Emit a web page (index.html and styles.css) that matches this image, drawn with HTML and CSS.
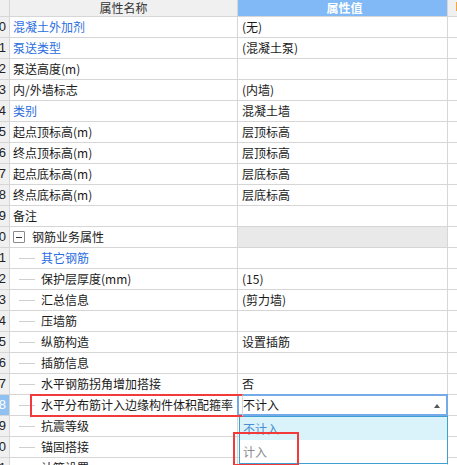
FILE: index.html
```
<!DOCTYPE html>
<html>
<head>
<meta charset="utf-8">
<link rel="stylesheet" href="styles.css">
</head>
<body>
<div class="grid">
  <div class="row head">
    <div class="gut"></div>
    <div class="name hname">属性名称</div>
    <div class="val hval">属性值</div>
    <div class="extra hextra"><span class="mark"></span></div>
  </div>
  <div class="row"><div class="gut"><span>20</span></div><div class="name link">混凝土外加剂</div><div class="val">(无)</div><div class="extra"></div></div>
  <div class="row"><div class="gut"><span>21</span></div><div class="name link">泵送类型</div><div class="val">(混凝土泵)</div><div class="extra"></div></div>
  <div class="row"><div class="gut"><span>22</span></div><div class="name">泵送高度(m)</div><div class="val"></div><div class="extra"></div></div>
  <div class="row"><div class="gut"><span>23</span></div><div class="name">内/外墙标志</div><div class="val">(内墙)</div><div class="extra"></div></div>
  <div class="row"><div class="gut"><span>24</span></div><div class="name link">类别</div><div class="val">混凝土墙</div><div class="extra"></div></div>
  <div class="row"><div class="gut"><span>25</span></div><div class="name">起点顶标高(m)</div><div class="val">层顶标高</div><div class="extra"></div></div>
  <div class="row"><div class="gut"><span>26</span></div><div class="name">终点顶标高(m)</div><div class="val">层顶标高</div><div class="extra"></div></div>
  <div class="row"><div class="gut"><span>27</span></div><div class="name">起点底标高(m)</div><div class="val">层底标高</div><div class="extra"></div></div>
  <div class="row"><div class="gut"><span>28</span></div><div class="name">终点底标高(m)</div><div class="val">层底标高</div><div class="extra"></div></div>
  <div class="row"><div class="gut"><span>29</span></div><div class="name">备注</div><div class="val"></div><div class="extra"></div></div>
  <div class="row"><div class="gut"><span>30</span></div><div class="name group"><span class="toggle"><span class="minus"></span></span>钢筋业务属性</div><div class="val grey"></div><div class="extra"></div></div>
  <div class="row"><div class="gut"><span>31</span></div><div class="name child link"><span class="branch"></span>其它钢筋</div><div class="val"></div><div class="extra"></div></div>
  <div class="row"><div class="gut"><span>32</span></div><div class="name child"><span class="branch"></span>保护层厚度(mm)</div><div class="val">(15)</div><div class="extra"></div></div>
  <div class="row"><div class="gut"><span>33</span></div><div class="name child"><span class="branch"></span>汇总信息</div><div class="val">(剪力墙)</div><div class="extra"></div></div>
  <div class="row"><div class="gut"><span>34</span></div><div class="name child"><span class="branch"></span>压墙筋</div><div class="val"></div><div class="extra"></div></div>
  <div class="row"><div class="gut"><span>35</span></div><div class="name child"><span class="branch"></span>纵筋构造</div><div class="val">设置插筋</div><div class="extra"></div></div>
  <div class="row"><div class="gut"><span>36</span></div><div class="name child"><span class="branch"></span>插筋信息</div><div class="val"></div><div class="extra"></div></div>
  <div class="row"><div class="gut"><span>37</span></div><div class="name child"><span class="branch"></span>水平钢筋拐角增加搭接</div><div class="val">否</div><div class="extra"></div></div>
  <div class="row sel"><div class="gut"><span>38</span></div><div class="name child"><span class="branch"></span>水平分布筋计入边缘构件体积配箍率</div>
    <div class="val combo-cell">
      <div class="combo">不计入<span class="arrow"></span></div>
      <div class="list">
        <div class="opt hi">不计入</div>
        <div class="opt dim">计入</div>
      </div>
      <div class="redbox red2"></div>
    </div>
    <div class="extra"></div>
    <div class="redbox red1"></div>
  </div>
  <div class="row"><div class="gut"><span>39</span></div><div class="name child"><span class="branch"></span>抗震等级</div><div class="val"></div><div class="extra"></div></div>
  <div class="row"><div class="gut"><span>40</span></div><div class="name child"><span class="branch"></span>锚固搭接</div><div class="val"></div><div class="extra"></div></div>
  <div class="row"><div class="gut"><span>41</span></div><div class="name child"><span class="branch"></span>计算设置</div><div class="val"></div><div class="extra"></div></div>
</div>
</body>
</html>
```
FILE: styles.css
```
* { box-sizing: border-box; }
html, body { margin: 0; padding: 0; background: #fff; overflow: hidden; }
body {
  font-family: "Noto Sans CJK SC", "Microsoft YaHei", sans-serif;
  font-size: 12px;
  color: #1a1a1a;
  width: 457px;
  height: 465px;
}
.grid { display: flex; flex-direction: column; }
.row {
  display: grid;
  grid-template-columns: 10px 228px 210px 1fr;
  height: 21px;
  border-bottom: 1px solid #d6d6d6;
  position: relative;
  line-height: 20px;
  flex: none;
}
.row > div { border-right: 1px solid #d6d6d6; white-space: nowrap; overflow: hidden; }
.row > .extra { border-right: none; }
.head { height: 17px; line-height: 16px; background: #f0f0f0; }
.gut {
  background: #f0f0f0;
  display: flex;
  justify-content: flex-end;
  padding-right: 3px;
  color: #222;
  font-family: "Liberation Sans", sans-serif;
  font-size: 13px;
}
.gut span { flex: none; }
.name { padding-left: 3px; }
.hname { text-align: center; color: #333; padding-left: 0; }
.hval { background: #80b9f5; color: #fff; text-align: center; font-weight: bold; }
.hextra { background: #f0f0f0; position: relative; }
.mark { position: absolute; left: 8px; top: 2px; width: 2px; height: 9px; background: #f5a53c; }
.val { padding-left: 4px; }
.val.grey { background: #e9e9e9; }
.link { color: #2a6de0; }
.group { display: flex; align-items: center; padding-left: 3px; }
.toggle {
  width: 12px; height: 12px; border: 1px solid #8a8a8a; border-radius: 1px;
  margin-right: 7px; display: flex; align-items: center; justify-content: center; flex: none;
}
.minus { width: 6px; height: 1px; background: #333; }
.child { display: flex; align-items: center; padding-left: 9px; }
.branch { width: 16px; height: 1px; background: #d0d0d0; margin-right: 6px; flex: none; }
.sel .gut { background: #8fc2f2; color: #fff; }
.row.sel > .combo-cell { overflow: visible; position: relative; padding-left: 0; }
.combo {
  position: absolute; left: -1px; top: -1px; width: 211px; height: 22px;
  border: 2px solid #74aae8; background: #fff; padding-left: 4px; line-height: 18px;
  z-index: 2;
}
.arrow {
  position: absolute; right: 6px; top: 8px; width: 0; height: 0;
  border-left: 3px solid transparent; border-right: 3px solid transparent;
  border-bottom: 4px solid #555;
}
.list {
  position: absolute; left: 1px; top: 21px; width: 209px; height: 48px;
  border: 1px solid #3d9fd2; background: #fff; z-index: 3;
}
.opt { height: 23px; line-height: 23px; padding-left: 3px; }
.opt.hi { background: #daf3fb; color: #4c8fd0; }
.opt.dim { color: #8c8c8c; }
.redbox { position: absolute; border: 2px solid #f23a3a; z-index: 5; pointer-events: none; }
.red1 { left: 30px; top: -1px; width: 213px; height: 23px; }
.red2 { left: -5px; top: 37px; width: 66px; height: 34px; }
```
